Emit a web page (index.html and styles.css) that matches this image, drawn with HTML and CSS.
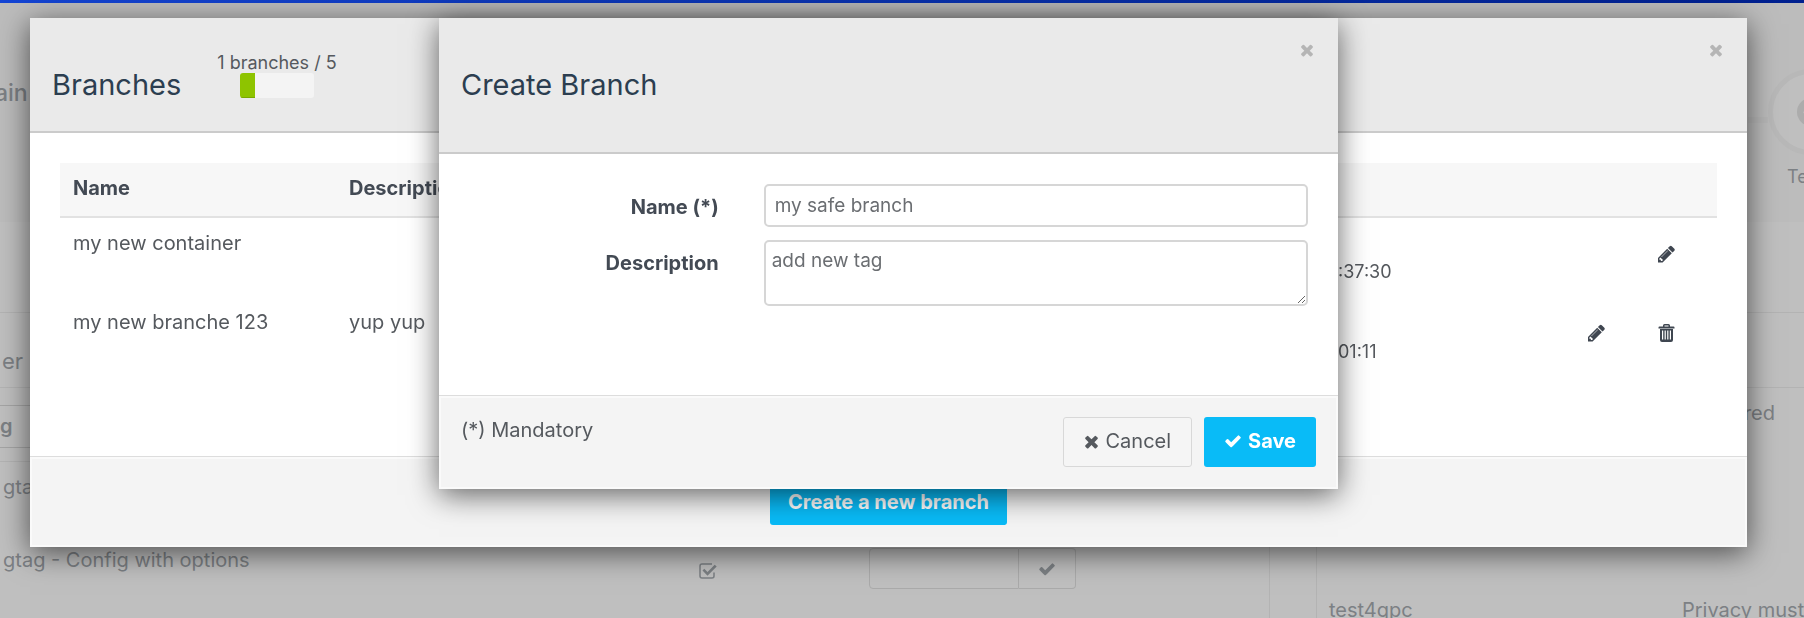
FILE: index.html
```
<!DOCTYPE html>
<html lang="en">
<head>
<meta charset="utf-8">
<title>Branches</title>
<link rel="stylesheet" href="styles.css">
</head>
<body>
<svg class="sprite" aria-hidden="true">
  <symbol id="times" viewBox="0 0 1408 1408"><path d="M1298 1130q0 40-28 68l-136 136q-28 28-68 28t-68-28l-294-294-294 294q-28 28-68 28t-68-28l-136-136q-28-28-28-68t28-68l294-294-294-294q-28-28-28-68t28-68l136-136q28-28 68-28t68 28l294 294 294-294q28-28 68-28t68 28l136 136q28 28 28 68t-28 68l-294 294 294 294q28 28 28 68z"/></symbol>
  <symbol id="check" viewBox="0 0 1792 1792"><path d="M1671 566q0 40-28 68l-724 724-136 136q-28 28-68 28t-68-28l-136-136-362-362q-28-28-28-68t28-68l136-136q28-28 68-28t68 28l294 295 656-657q28-28 68-28t68 28l136 136q28 28 28 68z"/></symbol>
  <symbol id="pencil" viewBox="128 128 1536 1536"><path d="M491 1536l91-91-235-235-91 91v107h128v128h107zm523-928q0-22-22-22-10 0-17 7l-542 542q-7 7-7 17 0 22 22 22 10 0 17-7l542-542q7-7 7-17zm-54-192l416 416-832 832h-416v-416zm683 96q0 53-37 90l-166 166-416-416 166-165q36-38 90-38 53 0 91 38l235 234q37 39 37 91z"/></symbol>
  <symbol id="trash" viewBox="0 0 16 18"><path fill-rule="evenodd" d="M4.500 2.500V1.500Q4.500 0 6 0h4Q11.500 0 11.500 1.500v1h3.500q1 0 1 1V4.500H0V3.500q0-1 1-1zM6 2.500h4v-1h-4zM1.500 5h13v11q0 2-2 2h-9q-2 0-2-2zM3.500 6.500v9h1.200V6.500zm2.600 0v9h1.200V6.500zm2.600 0v9h1.200V6.500zm2.600 0v9h1.200V6.500z"/></symbol>
  <symbol id="check-square" viewBox="0 0 18 16"><path fill="none" stroke="currentColor" stroke-width="1.500" d="M15 9.500V13q0 2-2 2H3q-2 0-2-2V3q0-2 2-2h10"/><path d="M3.500 7.500L5.300 5.700 8.500 8.900 15.700 1.700 17.700 3.600 8.500 12.700z"/></symbol>
</svg>

<div class="app">
  <div class="topbar"></div>
  <header class="app-header">
    <span class="app-title">ain</span>
    <div class="step">
      <span class="step-line"></span>
      <span class="step-circle"><span class="step-dot"><svg class="icon"><use href="#check"/></svg></span></span>
      <span class="step-label">Te</span>
    </div>
  </header>
  <main class="app-main">
    <section class="tags">
      <div class="band"></div>
      <div class="band tags-heading">er</div>
      <div class="filter"><span class="filter-box">g</span></div>
      <div class="tag-row"><span>gtag</span></div>
      <div class="tag-row">
        <span class="tag-name">gtag - Config with options</span>
        <svg class="icon tag-check"><use href="#check-square"/></svg>
        <span class="tag-order">
          <input class="order-input" type="text" aria-label="Order">
          <button class="order-button" type="button" aria-label="Apply order"><svg class="icon"><use href="#check"/></svg></button>
        </span>
      </div>
    </section>
    <section class="rules">
      <div class="band"></div>
      <div class="band"></div>
      <div class="rule-row"><span class="rule-name"></span><span class="rule-end">red</span></div>
      <div class="rule-row rule-last"><span class="rule-name">test4gpc</span><span>Privacy must</span></div>
    </section>
  </main>
</div>

<div class="overlay">
  <section class="modal" aria-labelledby="branches-title">
    <header class="modal-header">
      <h2 class="modal-title" id="branches-title">Branches</h2>
      <div class="usage">
        <span class="usage-label">1 branches / 5</span>
        <div class="usage-bar"><div class="usage-fill" style="width:20%"></div></div>
      </div>
      <button class="close" type="button" aria-label="Close"><svg class="icon"><use href="#times"/></svg></button>
    </header>
    <div class="modal-body branches-body">
      <table class="branches">
        <thead>
          <tr><th class="col-name">Name</th><th>Description</th><th class="col-time"></th><th class="col-actions"></th></tr>
        </thead>
        <tbody>
          <tr>
            <td>my new container</td><td></td><td class="time">:37:30</td>
            <td><div class="actions"><button type="button" aria-label="Edit"><svg class="icon"><use href="#pencil"/></svg></button></div></td>
          </tr>
          <tr>
            <td>my new branche 123</td><td>yup yup</td><td class="time">01:11</td>
            <td><div class="actions"><button type="button" aria-label="Edit"><svg class="icon"><use href="#pencil"/></svg></button><button type="button" aria-label="Delete"><svg class="icon"><use href="#trash"/></svg></button></div></td>
          </tr>
        </tbody>
      </table>
    </div>
    <footer class="modal-footer branches-footer">
      <button class="btn btn-primary btn-create" type="button">Create a new branch</button>
    </footer>
  </section>
</div>

<div class="overlay">
  <form class="modal modal-small" aria-labelledby="create-title">
    <header class="modal-header create-header">
      <h2 class="modal-title" id="create-title">Create Branch</h2>
      <button class="close" type="button" aria-label="Close"><svg class="icon"><use href="#times"/></svg></button>
    </header>
    <div class="modal-body create-body">
      <label for="name">Name (*)</label>
      <input class="field" id="name" type="text" value="my safe branch">
      <label for="description">Description</label>
      <textarea class="field field-area" id="description">add new tag</textarea>
    </div>
    <footer class="modal-footer">
      <span class="mandatory">(*) Mandatory</span>
      <button class="btn btn-default" type="button"><svg class="icon"><use href="#times"/></svg>Cancel</button>
      <button class="btn btn-primary" type="button"><svg class="icon"><use href="#check"/></svg>Save</button>
    </footer>
  </form>
</div>
</body>
</html>
```
FILE: styles.css
```
* { box-sizing: border-box; }

body {
  margin: 0;
  height: 100vh;
  overflow: hidden;
  background: #bfbfbf;
  color: #55595e;
  font-family: Inter, "Open Sans", sans-serif;
  font-size: 20px;
  line-height: 27px;
}

button, input, textarea { font: inherit; color: inherit; }
button { padding: 0; border: 0; background: none; cursor: pointer; }
.sprite { position: absolute; width: 0; height: 0; }
.icon { display: block; width: 18px; height: 18px; fill: currentColor; }

/* Page behind the dialogs */
.app { height: 100vh; overflow: hidden; color: #7c8084; }
.topbar { height: 3px; background: linear-gradient(90deg, #1445d4, #00208f); }
.app-header {
  display: flex;
  justify-content: space-between;
  height: 219px;
  background: #bcbcbc;
}
.app-title { margin-left: -5px; padding-top: 77px; font-size: 23px; font-weight: 500; }
.step {
  display: grid;
  grid-template-columns: 20px 86px;
  grid-template-rows: 86px 27px;
  row-gap: 8px;
  margin-right: -50px;
  padding-top: 66px;
}
.step-line { height: 6px; margin-top: 48px; background: #b8b8b8; }
.step-circle {
  display: flex;
  align-items: center;
  justify-content: center;
  border: 5px solid #b8b8b8;
  border-radius: 50%;
  background: #bfbfbf;
}
.step-dot {
  display: flex;
  align-items: center;
  justify-content: center;
  width: 28px;
  height: 28px;
  border-radius: 50%;
  background: #acacac;
  color: #bfbfbf;
}
.step-label { grid-column: 2; padding-left: 19px; font-size: 18px; }

.app-main { display: flex; gap: 46px; }
.tags { flex: 1; border-right: 1px solid #b3b3b3; }
.rules { width: 488px; border-left: 1px solid #b3b3b3; }
.band { height: 75px; border-bottom: 1px solid #b3b3b3; }
.band:first-child { height: 91px; }
.tags-heading { padding: 35px 0 0 2px; font-size: 22px; }
.filter { padding: 17px 0 13px; border-bottom: 1px solid #b3b3b3; }
.filter-box {
  display: block;
  width: 400px;
  padding: 7px 0;
  border: solid #a5a5a5;
  border-width: 1px 0;
  font-weight: 600;
}
.tag-row { display: flex; height: 73px; padding: 12px 0 0 3px; }
.tag-name { width: 696px; }
.tag-check { width: 18px; height: 16px; margin-top: 16px; }
.tag-order { display: flex; height: 41px; margin: 1px 0 0 152px; }
.order-input, .order-button { border: 1px solid #aaa; background: none; }
.order-input { width: 150px; border-radius: 4px 0 0 4px; }
.order-button {
  display: flex;
  align-items: center;
  justify-content: center;
  width: 57px;
  border-left: 0;
  border-radius: 0 4px 4px 0;
}
.rule-row { display: flex; justify-content: space-between; height: 197px; padding: 12px 29px 0 12px; }
.rule-last { justify-content: flex-start; padding-right: 0; white-space: nowrap; }
.rule-name { flex: none; width: 353px; }

/* Dialogs */
.overlay { position: fixed; inset: 0; padding: 18px 57px 0 30px; }
.modal { background: #fff; box-shadow: 0 6px 28px rgba(0, 0, 0, .6); }
.modal-small { max-width: 899px; margin: 0 auto; }
.modal-header {
  display: flex;
  align-items: flex-start;
  min-height: 115px;
  padding: 25px 22px 0;
  border-bottom: 2px solid #cbcbcb;
  background: #eaeaea;
}
.create-header { min-height: 136px; }
.modal-title {
  margin: 0;
  padding-top: 24px;
  color: #2c3e50;
  font-size: 29px;
  font-weight: 400;
  line-height: 36px;
}
.usage {
  display: flex;
  flex-direction: column;
  align-items: center;
  margin-left: 36px;
  padding-top: 10px;
  font-size: 18px;
  line-height: 20px;
}
.usage-bar { width: 74px; height: 25px; border-radius: 3px; background: #f4f4f4; overflow: hidden; }
.usage-fill { height: 100%; background: #8ec400; box-shadow: inset 0 -1px 0 #7aa800; }
.close { margin-left: auto; padding: 0 2px; color: #b5b5b5; }
.close .icon { width: 14px; height: 14px; }
.modal-body { padding: 30px; }
.branches-body { padding-bottom: 79px; }

.branches { width: 100%; table-layout: fixed; border-collapse: collapse; }
.branches th {
  height: 54px;
  padding: 0 13px 2px;
  border-bottom: 2px solid #e2e2e2;
  background: #f7f7f7;
  color: #434a54;
  font-weight: 700;
  text-align: left;
}
.branches td { height: 80px; padding: 12px 13px; vertical-align: top; }
.branches .time { padding-left: 0; font-size: 18px; vertical-align: bottom; }
.col-name { width: 276px; }
.col-time { width: 223px; }
.col-actions { width: 156px; }
.branches td:last-child { padding: 27px 15px 0 0; }
.actions { display: flex; justify-content: flex-end; color: #3f4650; }
.actions button { display: flex; justify-content: center; width: 71px; }
.actions .icon { width: 17px; height: 18px; }

.modal-footer {
  display: flex;
  gap: 12px;
  padding: 21px 22px 22px;
  border-top: 1px solid #ddd;
  background: #f4f4f4;
  box-shadow: inset 0 0 0 2px #fafafa;
}
.branches-footer { justify-content: center; padding-top: 18px; }
.mandatory { margin-right: auto; }
.btn {
  display: flex;
  align-items: center;
  justify-content: center;
  gap: 6px;
  height: 50px;
  padding: 0 20px 2px;
  border-radius: 3px;
}
.btn-default { border: 1px solid #d8d8d8; background: #f5f5f5; }
.btn-primary { background: #09bbf7; color: #fff; font-weight: 700; }
.btn-create { padding: 4px 18px 0; }
.btn-default .icon { width: 15px; height: 15px; }

.create-body {
  display: grid;
  grid-template-columns: 30% 1fr;
  gap: 13px 43px;
  padding-bottom: 89px;
}
.create-body label { padding: 10px 2px 0 0; color: #434a54; font-weight: 700; text-align: right; }
.field {
  display: block;
  width: 100%;
  height: 43px;
  margin: 0;
  padding: 0 9px;
  border: 2px solid #d6d6d6;
  border-radius: 5px;
  background: #fff;
  color: #6b6e72;
  font-size: 19px;
}
.field-area { height: 66px; padding: 5px 6px; resize: vertical; }
```
